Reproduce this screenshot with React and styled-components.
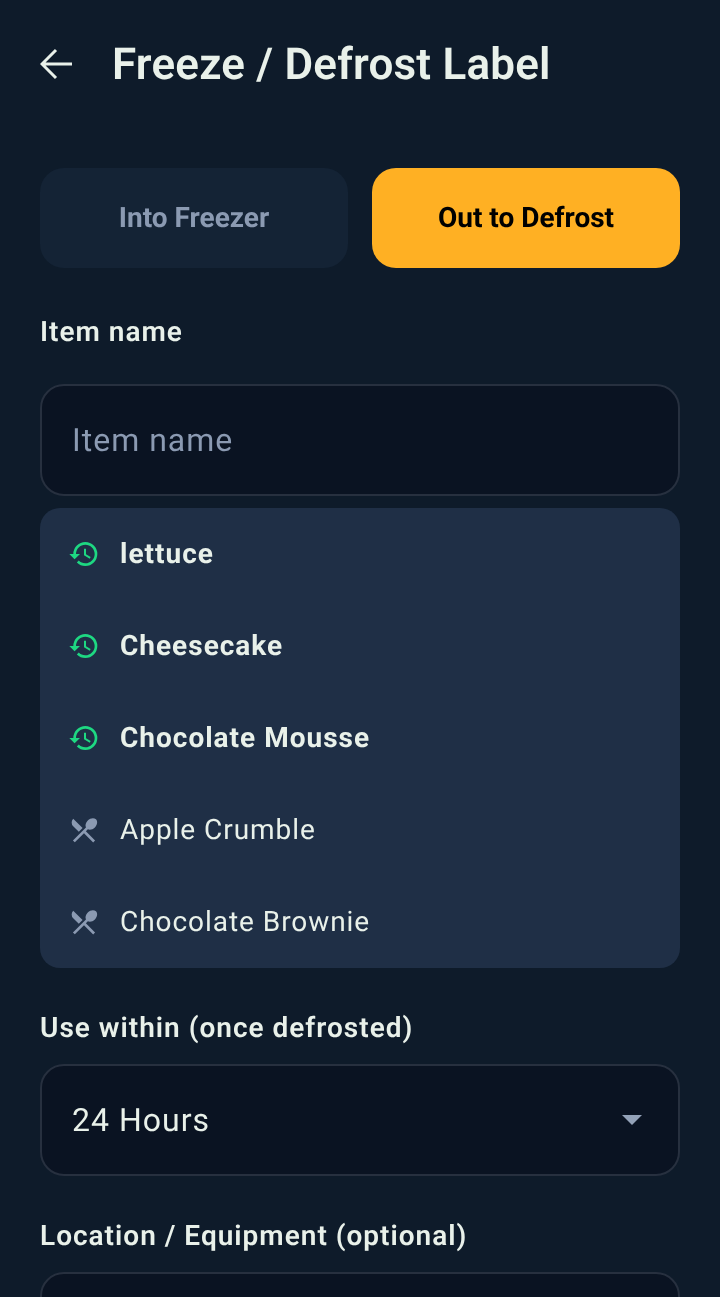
import styled, { createGlobalStyle } from 'styled-components'
import { MdHistory, MdRestaurantMenu } from 'react-icons/md'

const recent = ['lettuce', 'Cheesecake', 'Chocolate Mousse']
const presets = ['Apple Crumble', 'Chocolate Brownie']

const App = () => {
    return (
        <>
            <GlobalStyle />
            <Page>
                <Header>
                    <BackIcon viewBox="0 0 32 32" aria-hidden="true">
                        <path d="M32 16H2M16 2L2 16l14 14" />
                    </BackIcon>
                    <Title>Freeze / Defrost Label</Title>
                </Header>
                <Toggle>
                    <ModeButton>Into Freezer</ModeButton>
                    <ModeButton $active>Out to Defrost</ModeButton>
                </Toggle>
                <ItemLabel>Item name</ItemLabel>
                <Field>
                    <Placeholder>Item name</Placeholder>
                </Field>
                <Suggestions>
                    {recent.map((name) => (
                        <Suggestion key={name}>
                            <RecentIcon />
                            <RecentName>{name}</RecentName>
                        </Suggestion>
                    ))}
                    {presets.map((name) => (
                        <Suggestion key={name}>
                            <PresetIcon />
                            <PresetName>{name}</PresetName>
                        </Suggestion>
                    ))}
                </Suggestions>
                <FieldLabel>Use within (once defrosted)</FieldLabel>
                <Field>
                    <Value>24 Hours</Value>
                    <Caret />
                </Field>
                <FieldLabel>Location / Equipment (optional)</FieldLabel>
                <Field />
            </Page>
        </>
    )
}

const GlobalStyle = createGlobalStyle`
    html, body {
        margin: 0;
        height: 100%;
        overflow: hidden;
        background: #0e1b2a;
    }
    * {
        box-sizing: border-box;
    }
`
const Page = styled.div`
    height: 100vh;
    overflow: hidden;
    padding: 0 40px;
    font-family: Roboto, sans-serif;
    color: #e9f1ea;
    text-rendering: geometricPrecision;
    will-change: transform;
`
const Header = styled.header`
    display: flex;
    align-items: center;
    height: 128px;
`
const BackIcon = styled.svg`
    width: 32px;
    height: 32px;
    margin-right: 40px;
    fill: none;
    stroke: #e9f1ea;
    stroke-width: 3;
`
const Title = styled.h1`
    margin: 0;
    font-size: 44px;
    font-weight: 600;
    line-height: 48px;
    letter-spacing: 0.2px;
    color: #e9f1ea;
`
const Toggle = styled.div`
    display: grid;
    grid-template-columns: 1fr 1fr;
    gap: 24px;
    margin-top: 40px;
`
const ModeButton = styled.div`
    display: flex;
    align-items: center;
    justify-content: center;
    height: 100px;
    padding-bottom: 2px;
    border-radius: 24px;
    font-size: 28px;
    font-weight: 700;
    background: ${(p) => (p.$active ? '#ffb023' : '#142335')};
    color: ${(p) => (p.$active ? '#000000' : '#8b9ab2')};
`
const FieldLabel = styled.div`
    height: 32px;
    margin: 44px 0 20px;
    font-size: 28px;
    font-weight: 600;
    line-height: 32px;
    letter-spacing: 1px;
`
const ItemLabel = styled(FieldLabel)`
    margin: 48px 0 36px;
`
const Field = styled.div`
    display: flex;
    flex: none;
    align-items: center;
    justify-content: space-between;
    height: 112px;
    padding: 0 30px;
    border: 2px solid #27303f;
    border-radius: 24px;
    background: #0a1322;
`
const Placeholder = styled.span`
    font-size: 32px;
    letter-spacing: 1px;
    color: #8b9ab2;
`
const Value = styled.span`
    font-size: 32px;
    letter-spacing: 1px;
    color: #e9f1ea;
`
const Caret = styled.span`
    width: 0;
    height: 0;
    margin-right: 6px;
    border-left: 10px solid transparent;
    border-right: 10px solid transparent;
    border-top: 10px solid #93a2b8;
`
const Suggestions = styled.div`
    margin-top: 12px;
    border-radius: 20px;
    background: #1f2f46;
`
const Suggestion = styled.div`
    display: flex;
    align-items: center;
    gap: 20px;
    height: 92px;
    padding: 0 30px 2px;
`
const RecentIcon = styled(MdHistory)`
    flex: none;
    width: 32px;
    height: 32px;
    margin: 2px 0 0 -2px;
    color: #1ed882;
`
const PresetIcon = styled(MdRestaurantMenu)`
    flex: none;
    width: 32px;
    height: 32px;
    margin: 2px 0 0 -2px;
    color: #8b9ab2;
`
const RecentName = styled.span`
    font-size: 28px;
    font-weight: 700;
    letter-spacing: 1px;
`
const PresetName = styled.span`
    font-size: 28px;
    font-weight: 400;
    letter-spacing: 0.95px;
`

export default App
